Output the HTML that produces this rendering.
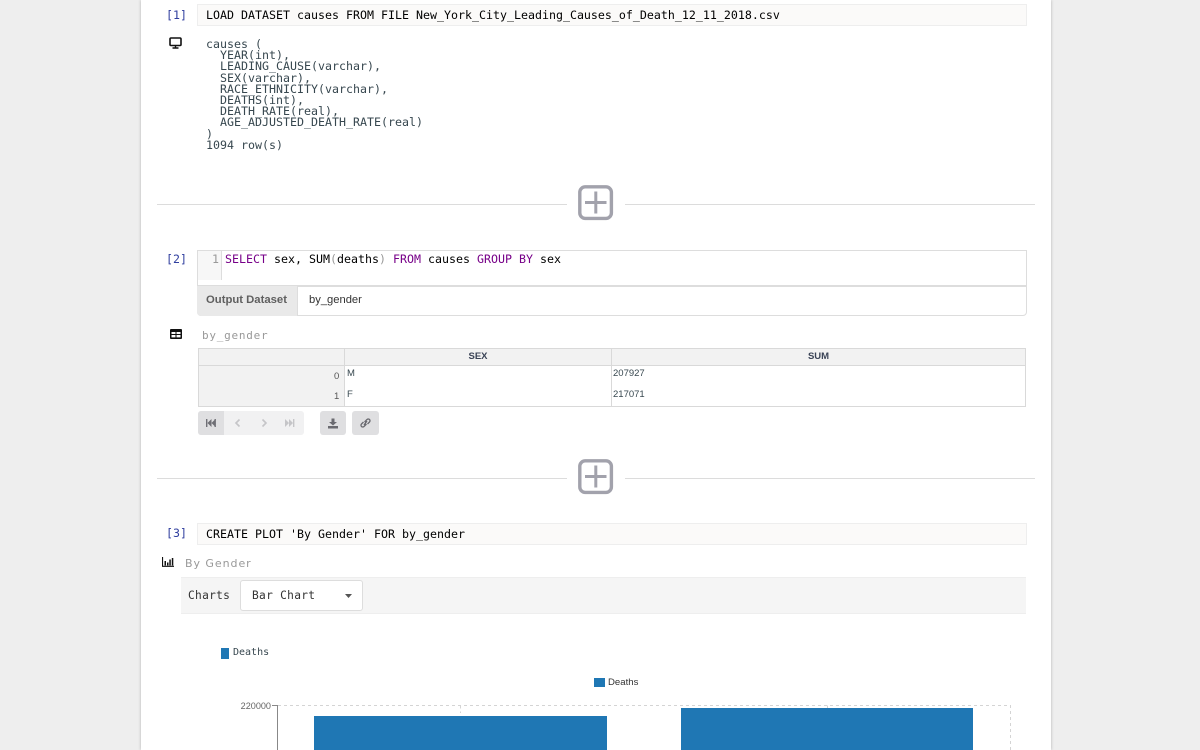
<!DOCTYPE html>
<html><head><meta charset="utf-8">
<style>
html,body{margin:0;padding:0;width:1200px;height:750px;overflow:hidden;background:#eee}
#page{position:absolute;left:141px;top:0;width:910px;height:750px;background:#fff;box-shadow:0 0 3px rgba(0,0,0,.25)}
.a{position:absolute;white-space:pre}
.m{font-family:"DejaVu Sans Mono","Liberation Mono",monospace;font-size:11.63px;color:#000}
.s{font-family:"Liberation Sans",sans-serif}
.p{color:#303f9f;font-size:11.63px;font-family:"DejaVu Sans Mono",monospace}
.box{position:absolute;box-sizing:border-box}
.code{background:#fbfaf9;border:1px solid #eeeeee}
.hr{position:absolute;height:1px;background:#dcdcdc}
.k{color:#770088}
.g{color:#999}
</style></head><body>
<div id="page"></div>

<!-- cell 1 -->
<div class="a p" style="left:166px;top:8px;line-height:14px">[1]</div>
<div class="box code" style="left:197px;top:4px;width:830px;height:22px"></div>
<div class="a m" style="left:206px;top:8px;line-height:14px">LOAD DATASET causes FROM FILE New_York_City_Leading_Causes_of_Death_12_11_2018.csv</div>
<svg class="a" style="left:169px;top:37px" width="13" height="12" viewBox="0 0 13 12"><rect x="1" y="1" width="11" height="7.5" rx="1" fill="none" stroke="#111" stroke-width="1.6"/><path d="M3.500 11h6M6.500 9v2" stroke="#111" stroke-width="1.4"/></svg>
<div class="a m" style="left:206px;top:39px;line-height:11.2px;color:#37474f">causes (
  YEAR(int),
  LEADING_CAUSE(varchar),
  SEX(varchar),
  RACE_ETHNICITY(varchar),
  DEATHS(int),
  DEATH_RATE(real),
  AGE_ADJUSTED_DEATH_RATE(real)
)
1094 row(s)</div>

<!-- add 1 -->
<div class="hr" style="left:157px;top:204px;width:410px"></div>
<div class="hr" style="left:625px;top:204px;width:410px"></div>
<svg class="a" style="left:578px;top:184px" width="36" height="37" viewBox="0 0 36 37"><rect x="1.800" y="2.800" width="31.600" height="31.600" rx="5.500" fill="#fff" stroke="#a2a2ac" stroke-width="3.400"/><path d="M7 18.500h21.500M17.800 7.500v22" stroke="#a2a2ac" stroke-width="3"/></svg>

<!-- cell 2 -->
<div class="a p" style="left:166px;top:252px;line-height:14px">[2]</div>
<div class="box" style="left:197px;top:250px;width:830px;height:36px;border:1px solid #ddd;background:#fff"></div>
<div class="box" style="left:198px;top:251px;width:24px;height:29px;background:#f7f7f7;border-right:1px solid #ddd"></div>
<div class="a m" style="left:212px;top:252px;line-height:14px;color:#999">1</div>
<div class="a m" style="left:225px;top:252px;line-height:14px"><span class="k">SELECT</span> sex, SUM<span class="g">(</span>deaths<span class="g">)</span> <span class="k">FROM</span> causes <span class="k">GROUP</span> <span class="k">BY</span> sex</div>
<div class="box" style="left:197px;top:286px;width:830px;height:30px;border:1px solid #ddd;border-radius:0 0 4px 4px;background:#fff"></div>
<div class="box" style="left:197px;top:286px;width:101px;height:30px;background:#e9e9e9;border-radius:0 0 0 4px;border-right:1px solid #ddd"></div>
<div class="a s" style="left:206px;top:293px;font-size:11.3px;font-weight:bold;color:#5f5f5f;line-height:14px">Output Dataset</div>
<div class="a s" style="left:309px;top:293px;font-size:11.2px;color:#333;line-height:14px">by_gender</div>

<svg class="a" style="left:170px;top:329px" width="12" height="10" viewBox="0 0 12 10"><rect width="12" height="10" rx="1" fill="#111"/><path d="M1.500 3h4v2h-4zM6.500 3h4v2h-4zM1.500 6h4v2.400h-4zM6.500 6h4v2.400h-4z" fill="#fff"/></svg>
<div class="a m" style="left:202px;top:329px;line-height:14px;color:#999;font-size:11px;letter-spacing:.75px">by_gender</div>

<!-- table -->
<div class="box" style="left:198px;top:348px;width:828px;height:59px;border:1px solid #d9d9d9;background:#fff"></div>
<div class="box" style="left:199px;top:349px;width:826px;height:17px;background:#f2f2f2;border-bottom:1px solid #d9d9d9"></div>
<div class="box" style="left:199px;top:366px;width:146px;height:40px;background:#f2f2f2"></div>
<div class="box" style="left:344px;top:349px;width:1px;height:57px;background:#d9d9d9"></div>
<div class="box" style="left:611px;top:349px;width:1px;height:57px;background:#d9d9d9"></div>
<div class="a s" style="left:345px;width:266px;text-align:center;top:351px;font-size:9.500px;font-weight:bold;color:#3a4356;line-height:12px">SEX</div>
<div class="a s" style="left:612px;width:413px;text-align:center;top:351px;font-size:9.500px;font-weight:bold;color:#3a4356;line-height:12px">SUM</div>
<div class="a s" style="left:334px;top:371px;font-size:9.500px;color:#555;line-height:12px">0</div>
<div class="a s" style="left:334px;top:391px;font-size:9.500px;color:#555;line-height:12px">1</div>
<div class="a s" style="left:347px;top:368px;font-size:9.500px;color:#37474f;line-height:12px">M</div>
<div class="a s" style="left:347px;top:389px;font-size:9.500px;color:#37474f;line-height:12px">F</div>
<div class="a s" style="left:613px;top:368px;font-size:9.500px;color:#37474f;line-height:12px">207927</div>
<div class="a s" style="left:613px;top:389px;font-size:9.500px;color:#37474f;line-height:12px">217071</div>

<!-- pager -->
<div class="box" style="left:198px;top:411px;width:106px;height:24px;background:#f1f1f2;border-radius:3px"></div>
<div class="box" style="left:198px;top:411px;width:26px;height:24px;background:#dfdfe1;border-radius:3px 0 0 3px"></div>
<svg class="a" style="left:198px;top:411px" width="106" height="24" viewBox="0 0 106 24">
<path d="M8 8v8h1.400V8zM9.500 12l4-4v8zM13.500 12l4-4v8z" fill="#6f6f75"/><rect x="16.500" y="8" width="1.400" height="8" fill="#6f6f75"/>
<path d="M41.500 8.500L38 12l3.500 3.500" fill="none" stroke="#c5c5c8" stroke-width="1.600"/>
<path d="M64.500 8.500L68 12l-3.500 3.500" fill="none" stroke="#c5c5c8" stroke-width="1.600"/>
<path d="M87 8l4 4-4 4zM91 8l4 4-4 4z" fill="#c5c5c8"/><rect x="95" y="8" width="1.400" height="8" fill="#c5c5c8"/>
</svg>
<div class="box" style="left:320px;top:411px;width:26px;height:24px;background:#dfdfe1;border-radius:3px"></div>
<svg class="a" style="left:320px;top:411px" width="26" height="24" viewBox="0 0 26 24"><path d="M11.500 7.500h3v3.500h2.500L13 14.500 9 11h2.500z M8 15h10v2.500H8z" fill="#6a6a70"/></svg>
<div class="box" style="left:352px;top:411px;width:27px;height:24px;background:#dfdfe1;border-radius:3px"></div>
<svg class="a" style="left:352px;top:411px" width="27" height="24" viewBox="0 0 27 24"><path d="M12.500 11l2.500-2.500a1.700 1.700 0 0 1 2.500 2.500l-2 2M14.500 13l-2.500 2.500a1.700 1.700 0 0 1-2.500-2.500l2-2M12 14l3-4" fill="none" stroke="#6a6a70" stroke-width="1.300"/></svg>

<!-- add 2 -->
<div class="hr" style="left:157px;top:478px;width:410px"></div>
<div class="hr" style="left:625px;top:478px;width:410px"></div>
<svg class="a" style="left:578px;top:458px" width="36" height="37" viewBox="0 0 36 37"><rect x="1.800" y="2.800" width="31.600" height="31.600" rx="5.500" fill="#fff" stroke="#a2a2ac" stroke-width="3.400"/><path d="M7 18.500h21.500M17.800 7.500v22" stroke="#a2a2ac" stroke-width="3"/></svg>

<!-- cell 3 -->
<div class="a p" style="left:166px;top:526px;line-height:14px">[3]</div>
<div class="box code" style="left:197px;top:523px;width:830px;height:22px"></div>
<div class="a m" style="left:206px;top:527px;line-height:14px">CREATE PLOT 'By Gender' FOR by_gender</div>
<svg class="a" style="left:162px;top:557px" width="12" height="10" viewBox="0 0 12 10"><path d="M.5 0v9.300H12" fill="none" stroke="#111" stroke-width="1.200"/><path d="M2.500 4h1.500v4.500H2.500zM5 5.500h1.500v3H5zM7.300 2.500h1.500v6H7.300zM9.800 1h1.500v7.500H9.800z" fill="#111"/></svg>
<div class="a m" style="left:185px;top:557px;line-height:14px;color:#999;font-size:11px;letter-spacing:.95px;font-family:'DejaVu Sans',sans-serif">By Gender</div>

<div class="box" style="left:181px;top:577px;width:845px;height:37px;background:#f5f5f5;border-top:1px solid #eee;border-bottom:1px solid #eee"></div>
<div class="a m" style="left:188px;top:589px;line-height:14px;color:#333;font-size:11.200px;letter-spacing:.3px">Charts</div>
<div class="box" style="left:240px;top:580px;width:123px;height:31px;background:#fff;border:1px solid #ddd;border-radius:3px"></div>
<div class="a m" style="left:252px;top:589px;line-height:14px;color:#333;font-size:11.200px;letter-spacing:.3px">Bar Chart</div>
<svg class="a" style="left:345px;top:594px" width="7" height="4"><path d="M0 0h7L3.500 4z" fill="#555"/></svg>

<div class="box" style="left:221px;top:648px;width:8px;height:11px;background:#1f77b4"></div>
<div class="a m" style="left:233px;top:646px;line-height:14px;color:#37474f;font-size:10px">Deaths</div>

<div class="box" style="left:594px;top:678px;width:11px;height:9px;background:#1f77b4"></div>
<div class="a s" style="left:608px;top:677px;line-height:12px;font-size:9.600px;color:#333">Deaths</div>

<!-- chart -->
<svg class="a" style="left:230px;top:695px" width="800" height="55" viewBox="0 0 800 55">
<path d="M48 10.500H780.500V55" fill="none" stroke="#d4d4d4" stroke-dasharray="3 3"/>
<path d="M230.500 10.500V18M597.500 10.500V13" stroke="#d4d4d4" stroke-dasharray="3 3"/>
<path d="M42 10.500h5.500V55" fill="none" stroke="#888"/>
<rect x="84" y="21" width="293" height="34" fill="#1f77b4"/>
<rect x="451" y="13" width="292" height="42" fill="#1f77b4"/>
<text x="41" y="14" text-anchor="end" font-family="Liberation Sans,sans-serif" font-size="9.100" fill="#666">220000</text>
</svg>
</body></html>
